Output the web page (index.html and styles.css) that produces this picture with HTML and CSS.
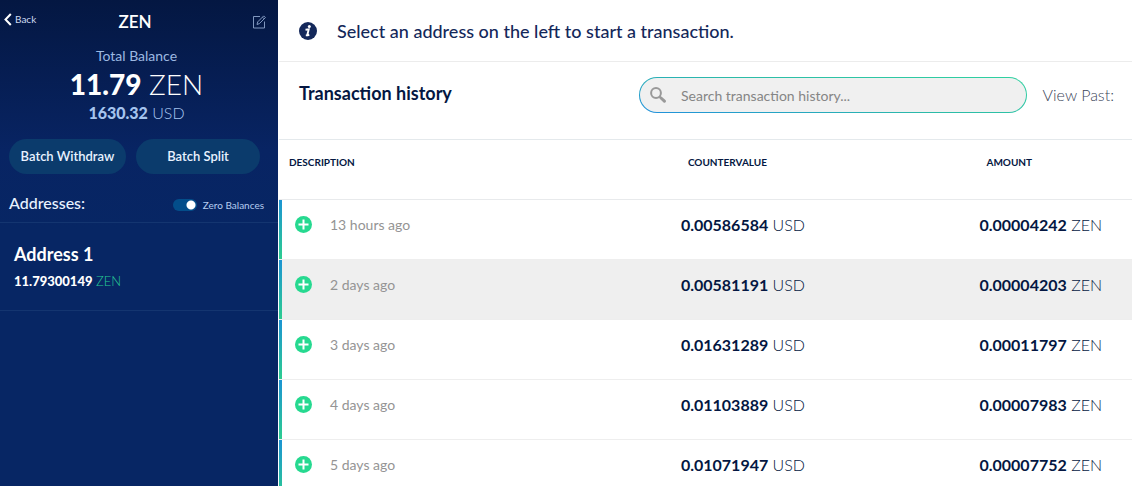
FILE: index.html
```html
<!DOCTYPE html>
<html lang="en">
<head>
<meta charset="utf-8">
<meta name="viewport" content="width=device-width, initial-scale=1">
<title>ZEN wallet</title>
<link rel="stylesheet" href="styles.css">
</head>
<body>
<svg class="sprite" aria-hidden="true">
  <symbol id="plus" viewBox="0 0 17 17">
    <circle cx="8.500" cy="8.500" r="8.500" fill="#26d990"/>
    <path d="M8.500 3.500v10M3.500 8.500h10" stroke="#fff" stroke-width="2"/>
  </symbol>
</svg>
<div class="app">
  <aside class="sidebar">
    <header class="sidebar-header">
      <a class="back" href="#"><svg class="back-icon" viewBox="0 0 8 13" aria-hidden="true"><path d="M6.800 1 1.500 6.500 6.800 12" fill="none" stroke="#fff" stroke-width="2"/></svg>Back</a>
      <h1 class="coin">ZEN</h1>
      <button class="edit" type="button" aria-label="Edit"><svg viewBox="0 0 14 14" aria-hidden="true"><path d="M8 1.500H1.500v11.500H12.500V6.500M5 9.500l.7-2.600 6-6 1.700 1.700-6 6zM10.500 2.200l1.600 1.600" fill="none" stroke="#8fa6cc" stroke-width="0.900"/></svg></button>
    </header>
    <section class="balance">
      <p class="balance-label">Total Balance</p>
      <p class="balance-coin"><strong>11.79</strong> ZEN</p>
      <p class="balance-fiat"><strong>1630.32</strong> USD</p>
    </section>
    <div class="actions">
      <button class="action" type="button">Batch Withdraw</button>
      <button class="action" type="button">Batch Split</button>
    </div>
    <div class="addresses-bar">
      <h2 class="addresses-title">Addresses:</h2>
      <label class="zero"><input class="switch" type="checkbox" checked>Zero Balances</label>
    </div>
    <article class="address">
      <h3 class="address-name">Address 1</h3>
      <p class="address-amount"><strong>11.79300149</strong> <span class="unit">ZEN</span></p>
    </article>
  </aside>
  <main class="main">
    <div class="notice">
      <svg class="info" viewBox="0 0 18 18" aria-hidden="true"><circle cx="9" cy="9" r="9" fill="#14285a"/><circle cx="10.300" cy="4.600" r="1.500" fill="#fff"/><path d="M6.500 7.800l3.200-.4-1.400 5.500q-.1 1 1.900-.5M6.800 13.400h2" fill="none" stroke="#fff" stroke-width="1.900"/></svg>
      <p class="notice-text">Select an address on the left to start a transaction.</p>
    </div>
    <div class="toolbar">
      <h2 class="toolbar-title">Transaction history</h2>
      <div class="search">
        <svg class="search-icon" viewBox="0 0 16 16" aria-hidden="true"><circle cx="6" cy="6" r="4.900" fill="none" stroke="#999" stroke-width="2"/><path d="M9.500 9.500l1.500 1.500" stroke="#999" stroke-width="2"/><path d="M11 11l3.400 3.200" stroke="#999" stroke-width="3" stroke-linecap="round"/></svg>
        <input class="search-input" type="text" aria-label="Search transaction history" placeholder="Search transaction history...">
      </div>
      <span class="view-past">View Past:</span>
    </div>
    <table class="history">
      <thead>
        <tr><th class="col-description">DESCRIPTION</th><th class="col-value">COUNTERVALUE</th><th>AMOUNT</th></tr>
      </thead>
      <tbody>
        <tr><td><div class="when"><svg class="plus"><use href="#plus"/></svg>13 hours ago</div></td><td><strong>0.00586584</strong> USD</td><td><strong>0.00004242</strong> ZEN</td></tr>
        <tr class="active"><td><div class="when"><svg class="plus"><use href="#plus"/></svg>2 days ago</div></td><td><strong>0.00581191</strong> USD</td><td><strong>0.00004203</strong> ZEN</td></tr>
        <tr><td><div class="when"><svg class="plus"><use href="#plus"/></svg>3 days ago</div></td><td><strong>0.01631289</strong> USD</td><td><strong>0.00011797</strong> ZEN</td></tr>
        <tr><td><div class="when"><svg class="plus"><use href="#plus"/></svg>4 days ago</div></td><td><strong>0.01103889</strong> USD</td><td><strong>0.00007983</strong> ZEN</td></tr>
        <tr><td><div class="when"><svg class="plus"><use href="#plus"/></svg>5 days ago</div></td><td><strong>0.01071947</strong> USD</td><td><strong>0.00007752</strong> ZEN</td></tr>
      </tbody>
    </table>
  </main>
</div>
</body>
</html>
```
FILE: styles.css
```css
* { box-sizing: border-box; margin: 0; padding: 0; }
body { font-family: Lato, "Open Sans", sans-serif; background: #fff; color: #041742; }
button, input { font: inherit; color: inherit; border: 0; background: none; }
.sprite { display: none; }
.app { display: grid; grid-template-columns: 278px 1fr; height: 100vh; overflow: hidden; }

.sidebar { background: linear-gradient(#041742, #082463 150px, #072664 230px); color: #fff; }
.sidebar-header { display: grid; grid-template-columns: 1fr auto 1fr; align-items: center; height: 44px; padding: 0 12px 0 4px; }
.back { display: flex; align-items: center; gap: 3px; padding-bottom: 6px; font-size: 10px; line-height: 14px; color: #cfdcf2; text-decoration: none; }
.back-icon { width: 8px; height: 13px; }
.coin { font-size: 17px; line-height: 20px; font-weight: 600; }
.edit { justify-self: end; width: 14px; height: 14px; }
.edit svg { display: block; width: 14px; height: 14px; }
.balance { padding: 2px 5px 0 0; text-align: center; }
.balance-label { font-size: 14px; line-height: 20px; color: #9db9e2; }
.balance-coin { font-size: 28px; line-height: 36px; font-weight: 300; }
.balance-coin strong { font-weight: 900; }
.balance-fiat { font-size: 16px; line-height: 22px; font-weight: 300; color: #a5c4ee; }
.balance-fiat strong { font-weight: 900; }
.actions { display: flex; gap: 10px; padding: 15px 18px 0 9px; }
.action { flex: 124 1 0; height: 35px; padding-bottom: 2px; border-radius: 18px; background: #0b3b6c; font-size: 13px; font-weight: 600; color: #e8f2ff; white-space: nowrap; }
.action:first-child { flex-grow: 117; }
.addresses-bar { display: flex; align-items: center; justify-content: space-between; height: 49px; padding: 10px 14px 0 9px; border-bottom: 1px solid #143570; }
.addresses-title { font-size: 16px; line-height: 20px; font-weight: 500; color: #e8f2ff; }
.zero { display: flex; align-items: center; gap: 6px; padding-top: 4px; font-size: 10px; line-height: 14px; color: #b5cdf0; }
.switch { appearance: none; width: 24px; height: 12px; border-radius: 6px; background: radial-gradient(circle at 18px 6px, #fff 4px, #034d8a 5px); }
.address { padding: 19px 14px; border-bottom: 1px solid #143570; }
.address-name { font-size: 18px; line-height: 24px; font-weight: 700; }
.address-amount { padding-top: 5px; font-size: 13px; line-height: 20px; font-weight: 300; }
.address-amount strong { font-weight: 900; }
.unit { color: #26c995; }

.main { padding-left: 1px; }
.notice { display: flex; align-items: center; gap: 20px; height: 62px; padding: 0 20px; border-bottom: 1px solid #ececec; }
.info { width: 18px; height: 18px; }
.notice-text { font-size: 18px; line-height: 24px; color: #14285a; font-weight: 500; }
.toolbar { display: grid; grid-template-columns: 324px 1fr auto; align-items: center; gap: 16px; height: 78px; padding: 0 18px 12px 20px; border-bottom: 1px solid #e4e9ec; }
.toolbar-title { padding-bottom: 4px; font-size: 18px; line-height: 20px; font-weight: 700; }
.search { display: flex; align-items: center; gap: 15px; height: 36px; padding: 0 10px; border: 1px solid transparent; border-radius: 18px; background: linear-gradient(#f0f0f0, #f0f0f0) padding-box, linear-gradient(10deg, #2190dd, #2cbba8 50%, #30d2a0) border-box; }
.search-icon { flex: none; width: 16px; height: 16px; }
.search-input { flex: 1; min-width: 0; height: 34px; padding-top: 2px; font-size: 14px; outline: 0; }
.search-input::placeholder { color: #858585; opacity: 1; }
.view-past { font-size: 16px; line-height: 20px; font-weight: 300; color: #3c465a; }
.history { width: 100%; table-layout: fixed; border-spacing: 0; text-align: left; }
.history th { height: 60px; padding: 0 8px 16px; border-bottom: 1px solid #e8eaec; font-size: 10px; line-height: 14px; font-weight: 700; }
.history .col-description { width: 47%; padding-left: 10px; }
.col-value { width: 35%; }
.history td { height: 60px; padding: 0 0 10px 1px; border-bottom: 1px solid #eee; font-size: 16px; line-height: 20px; font-weight: 300; }
.history td strong { font-weight: 700; }
.history td:first-child { padding-left: 0; background: linear-gradient(#1c94d2, #2dcc90) no-repeat left top / 3px 100%; background-clip: padding-box; background-origin: padding-box; }
.history .active td { background-color: #efefef; }
.when { display: flex; align-items: center; gap: 18px; padding-left: 16px; font-size: 14px; font-weight: 400; color: #949494; }
.plus { width: 17px; height: 17px; }
```
